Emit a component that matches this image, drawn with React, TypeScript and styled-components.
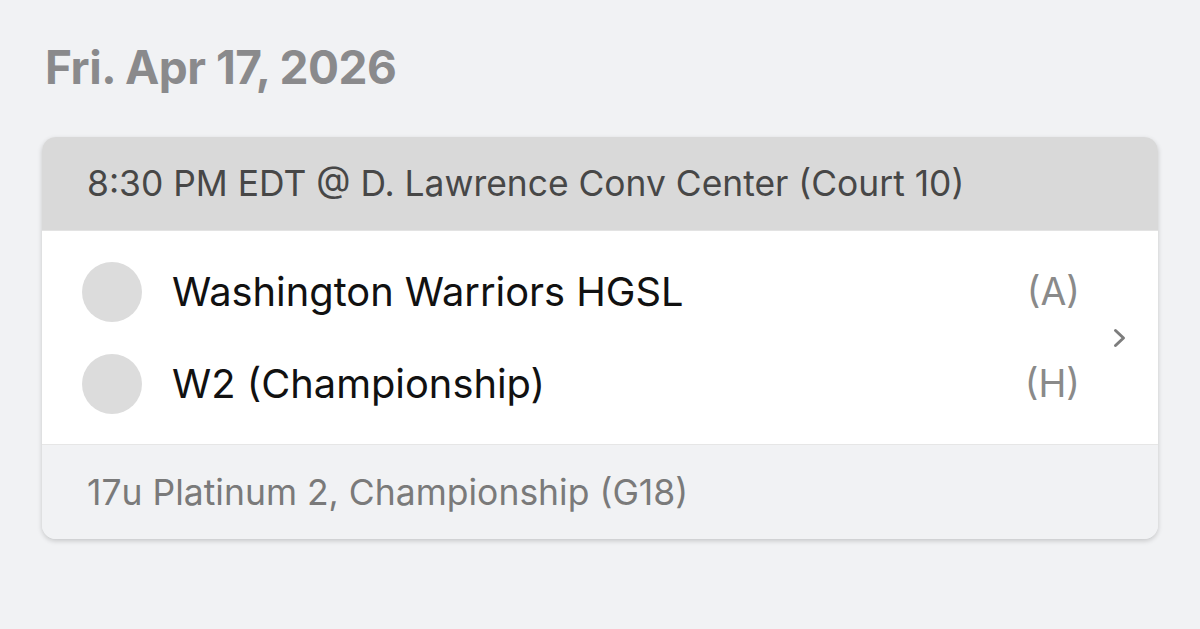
import styled, { createGlobalStyle } from "styled-components";

const GlobalStyle = createGlobalStyle`
  html, body {
    margin: 0;
    padding: 0;
    background: #f1f2f4;
    font-family: Inter, "Liberation Sans", sans-serif;
  }
`;

type Team = { name: string; side: string };

const teams: Team[] = [
  { name: "Washington Warriors HGSL", side: "(A)" },
  { name: "W2 (Championship)", side: "(H)" },
];

const App = () => {
  return (
    <Page>
      <GlobalStyle />
      <DateTitle>Fri. Apr 17, 2026</DateTitle>
      <Card>
        <CardHeader>8:30 PM EDT @ D. Lawrence Conv Center (Court 10)</CardHeader>
        <CardBody>
          <TeamList>
            {teams.map((t) => (
              <TeamRow key={t.name}>
                <Avatar />
                <TeamName>{t.name}</TeamName>
                <Side>{t.side}</Side>
              </TeamRow>
            ))}
          </TeamList>
          <Chevron viewBox="0 0 16 24" fill="none" stroke="currentColor" strokeWidth="3" strokeLinecap="round" strokeLinejoin="round">
            <path d="M3.5 4.5l8 7.5-8 7.5" />
          </Chevron>
        </CardBody>
        <CardFooter>17u Platinum 2, Championship (G18)</CardFooter>
      </Card>
    </Page>
  );
};

const Page = styled.div`
  padding: 38px 42px 0 42px;
  min-height: 629px;
  box-sizing: border-box;
`;

const DateTitle = styled.h1`
  margin: 0 0 0 3px;
  font-size: 46px;
  font-weight: 700;
  color: #8a8a8c;
  line-height: 58px;
  letter-spacing: -0.5px;
`;

const Card = styled.div`
  margin-top: 41px;
  width: 1116px;
  border-radius: 14px;
  overflow: hidden;
  background: #f1f2f4;
  box-shadow: 0 2px 5px rgba(0, 0, 0, 0.18);
`;

const CardHeader = styled.div`
  height: 93px;
  display: flex;
  align-items: center;
  padding: 0 45px;
  background: #d9d9d9;
  color: #474747;
  font-size: 35.4px;
  border-bottom: 1px solid #e3e3e3;
`;

const CardBody = styled.div`
  display: flex;
  align-items: center;
  background: #ffffff;
  padding: 0 30px 0 40px;
  height: 213px;
`;

const TeamList = styled.div`
  flex: 1;
  display: flex;
  flex-direction: column;
  gap: 32px;
`;

const TeamRow = styled.div`
  display: flex;
  align-items: center;
  height: 60px;
`;

const Avatar = styled.div`
  width: 60px;
  height: 60px;
  border-radius: 50%;
  background: #dcdcdc;
  flex-shrink: 0;
`;

const TeamName = styled.div`
  flex: 1;
  margin-left: 30px;
  font-size: 39.8px;
  color: #111111;
`;

const Side = styled.div`
  font-size: 37.5px;
  color: #8a8a8a;
  margin-right: 32px;
`;

const Chevron = styled.svg`
  width: 16px;
  height: 24px;
  color: #7d7d7d;
`;

const CardFooter = styled.div`
  height: 94px;
  display: flex;
  align-items: center;
  padding: 0 45px;
  background: #f1f2f4;
  border-top: 1px solid #e6e6e6;
  color: #7a7a7a;
  font-size: 35.5px;
`;

export default App;
